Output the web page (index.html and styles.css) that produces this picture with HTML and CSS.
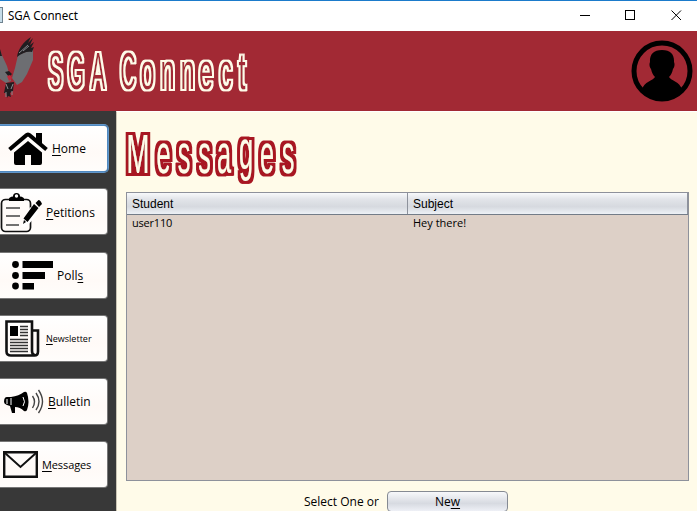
FILE: index.html
```html
<!DOCTYPE html>
<html lang="en">
<head>
<meta charset="utf-8">
<title>SGA Connect</title>
<link rel="stylesheet" href="styles.css">
</head>
<body>
<div class="window">
  <div class="titlebar">
    <span class="app-icon"></span>
    <span class="title"><svg width="90" height="22"><text x="0" y="14" textLength="70" lengthAdjust="spacingAndGlyphs">SGA Connect</text></svg></span>
    <svg class="controls" width="137" height="30" fill="none" stroke="#000" shape-rendering="crispEdges"><path d="M20 14.5h10M65.500 9.500h9v9h-9z"/><path shape-rendering="auto" d="M111.500 9.500l9.500 9.500M121 9.500l-9.500 9.500"/></svg>
  </div>
  <header class="banner">
    <svg class="eagle" width="36" height="80" viewBox="0 31 36 80">
      <path fill="#6d6e72" d="M0 51L7 66 9 73 11 81 6 83 0 79zM15 68L18 55 33 49 33 60 27 74 22 82 17 85 12 78z"/>
      <path fill="#201d20" d="M0 49L2 56 0 56zM17 57C18 49 24 41 31 37L28 43 33 38 30 45 34 42 31 48 34 47 32 52C27 51 22 53 17 57zM5 72l4-1 3 3-3 3zM6 83l8-1-1 9-3 2 1 4-3-1-1 2-1-5-2 0z"/>
      <path stroke="#84858a" fill="none" d="M19 53l9-8M23 51l6-5"/>
      <path fill="#c1293b" d="M7 76l3-1 2 3-3 3z"/>
      <path stroke="#8b8d91" fill="none" d="M6 84l2 5M13 84l-2 5M6 92v5M12 91v4"/>
    </svg>
    <h1 class="brand"><svg width="216" height="80" viewBox="40 31 216 80">
      <defs><filter id="cream-edge" filterUnits="userSpaceOnUse" x="40" y="31" width="216" height="80"><feMorphology in="SourceAlpha" operator="dilate" radius="2" result="d"/><feFlood flood-color="#fffbe9"/><feComposite in2="d" operator="in" result="o"/><feMerge><feMergeNode in="o"/><feMergeNode in="SourceGraphic"/></feMerge></filter></defs>
      <g filter="url(#cream-edge)" fill="#a22934" font-size="52"><text class="display" transform="translate(0 89) scale(.41 1)" x="135.400 185.400 239 275 312.200">SGA C</text><text class="display" transform="translate(0 89) scale(.49 1)" x="301 341.800 382.700 420.400 460.200 493.900">onnect</text></g>
    </svg></h1>
    <svg class="avatar" width="62" height="64" viewBox="0 0 62 64"><defs><clipPath id="face"><circle cx="31" cy="32" r="29"/></clipPath></defs><circle cx="31" cy="32" r="28" fill="none" stroke="#000" stroke-width="5"/><path clip-path="url(#face)" d="M31 11c9 0 12.500 5 12 12 1 2 .5 5-1 7-1 4-2 6-4 8 2 4 11 4 13 13v13H11V51c2-9 11-9 13-13-2-2-3-4-4-8-1.500-2-2-5-1-7C18.500 16 22 11 31 11z"/></svg>
  </header>
  <div class="body">
    <nav class="sidebar">
      <button class="nav focused"><svg class="icon home" width="40" height="34" viewBox="0 0 40 34"><path d="M6 20.500L20 9l14 11.500V31q0 2-2 2h-9V23h-6v10H8q-2 0-2-2z"/><path d="M28 1h6v12l-6-4z"/><path d="M1.500 17.500L18 3.500q2-2 4 0l16.500 14" fill="none" stroke="#000" stroke-width="4"/><path d="M4 20.500L20 7l16 13.500" fill="none" stroke="#fff" stroke-width="1"/></svg><span><u>H</u>ome</span></button>
      <button class="nav second"><svg class="icon petitions" width="42" height="41" viewBox="0 0 42 41"><rect x="1.500" y="7.500" width="29" height="32" rx="4" fill="none" stroke="#111" stroke-width="1.700"/><path d="M9 9l0-2q0-2 4-2.500a3.500 3.500 0 017 0Q24 5 24 7v2z"/><circle cx="16.500" cy="4" r="1.700" fill="#fff"/><path d="M6 16h14M6 24h14M6 33h13" stroke="#444" stroke-width="1.400"/><path d="M30 15l9 6-13 14h-5z" fill="#fff"/><path d="M35.500 11l3-3q2 0 3.500 4l-3 3zM34 12l4.500 4L27.500 30l-4-3.500z"/><path d="M24 28l2 2-3 2z"/></svg><span><u>P</u>etitions</span></button>
      <button class="nav third"><svg class="icon polls" width="41" height="29" viewBox="0 0 41 29"><circle cx="3.500" cy="3.500" r="3.400"/><circle cx="3.500" cy="14.500" r="3.400"/><circle cx="3.500" cy="25" r="3.400"/><path d="M10.500 0H41v7H10.500zM10.500 11H33v7H10.500zM10.500 22H22v6.500H10.500z"/></svg><span>Poll<u>s</u></span></button>
      <button class="nav small"><svg class="icon news" width="35" height="37" viewBox="0 0 35 37"><path d="M27 10.500h6v21q0 4-3.500 4H6q-4.500 0-4.500-4v-30h25.500V31q0 4 3 4" fill="none" stroke="#111" stroke-width="2.600"/><path d="M5 6h8v10H5z"/><path d="M15 6.500h8M15 9.500h8M15 12.500h8M15 15.500h8M5 19.500h18M5 22.500h18M5 25.500h18M5 28.500h18M5 31.500h18" stroke="#333" stroke-width="1.400"/></svg><span><u>N</u>ewsletter</span></button>
      <button class="nav"><svg class="icon bulletin" width="40" height="25" viewBox="0 0 40 25"><path d="M0 13q0-5 3-5l4 0Q15 7 20 3q2-1 3 1 3 9 0 17-1 2-3 1-4-4-9-4v6H8l-2-7-3-1q-3-1-3-3z"/><path d="M3 10v5M19 8q3 5 0 9M7 9v7" fill="none" stroke="#fff"/><path d="M28.500 7q4 5.500 0 12M32 4q6 8.500 0 17M34.500 1q8 11.500 0 23" fill="none" stroke="#444" stroke-width="1.400"/></svg><span><u>B</u>ulletin</span></button>
      <button class="nav medium"><svg class="icon mail" width="35" height="27" viewBox="0 0 35 27" fill="none" stroke="#111"><path stroke-width="2.400" d="M1.200 1.200h32.600v24.600H1.200z"/><path stroke-width="2" d="M2 2l15.500 14L33 2"/></svg><span><u>M</u>essages</span></button>
    </nav>
    <main class="content">
      <h2 class="heading"><svg width="184" height="70" viewBox="120 118 184 70">
        <defs><filter id="red-edge" filterUnits="userSpaceOnUse" x="120" y="118" width="184" height="70"><feMorphology in="SourceAlpha" operator="dilate" radius="3" result="d"/><feFlood flood-color="#a81824"/><feComposite in2="d" operator="in" result="o"/><feMerge><feMergeNode in="o"/><feMergeNode in="SourceGraphic"/></feMerge></filter></defs>
        <g filter="url(#red-edge)" fill="#fffbe9" font-size="55"><text class="display" transform="translate(0 173) scale(.5 1)" x="276">M</text><text class="display" transform="translate(0 173) scale(.46 1)" x="355.400 400 444.600 487 534.800 580.400 626" dy="0 0 0 0 -4 4 0">essages</text></g>
      </svg></h2>
      <div class="table">
        <div class="row head"><span>Student</span><span>Subject</span></div>
        <div class="row"><span class="user">user110</span><span>Hey there!</span></div>
      </div>
      <div class="actions"><span class="prompt">Select One or</span><button class="new">Ne<u>w</u></button></div>
    </main>
  </div>
</div>
</body>
</html>
```

FILE: styles.css
```css
* { box-sizing: border-box; }
body { margin: 0; overflow: hidden; font-family: "Open Sans", "Noto Sans", sans-serif; font-size: 12px; color: #000; }
.window { width: 697px; height: 511px; display: flex; flex-direction: column; overflow: hidden; background: #fff; }
.titlebar { height: 31px; flex: none; display: flex; align-items: flex-start; border-top: 1px solid #1b7bcb; }
.app-icon { width: 3px; height: 16px; margin-top: 6px; border: 1px solid #6f8390; border-left: 0; background: #c5dce9; }
.title { margin: 5px 0 0 5px; font-family: "Noto Sans", sans-serif; }
.title svg { display: block; }
.controls { margin-left: auto; }
.banner { height: 80px; flex: none; display: flex; background: #a22934; }
.brand, .heading { margin: 0; line-height: 0; }
.eagle { flex: none; }
.brand { margin-left: 4px; }
.display { font-family: "Liberation Sans", sans-serif; font-weight: normal; text-anchor: middle; white-space: pre; }
.avatar { margin: 8px 4px 0 auto; }
.body { flex: 1; min-height: 0; display: flex; }
.sidebar { width: 116px; flex: none; display: flex; flex-direction: column; gap: 16px; padding-top: 14px; background: #383838; }
.nav { width: 108px; height: 47px; flex: none; display: flex; align-items: center; padding: 0; border: 1px solid #777; border-left: 0; border-radius: 0 4px 4px 0; background: linear-gradient(#fff, #fffaf7 60%, #fffdfb); font: inherit; color: #000; }
.nav.focused { box-shadow: 0 0 0 1px #6297ca; border-color: #5089c0; }
.nav.second { padding-top: 2px; }
.nav.third { margin-top: 1px; }
.nav span { line-height: 16px; }
.nav.small { font-size: 9px; }
.nav.medium { font-size: 11px; letter-spacing: -.1px; }
u { text-decoration-thickness: 1px; text-underline-offset: 2px; }
.icon { flex: none; }
.home { margin: 0 4px 0 8px; }
.petitions { margin: 0 4px 0 0; }
.polls { margin: 0 4px 0 12px; }
.news { margin: 0 6px 0 5px; }
.bulletin { margin: 0 4px 0 4px; }
.mail { margin: 0 4px 0 3px; }
.content { flex: 1; min-width: 0; border-left: 1px solid #c9c4b4; border-top: 1px solid #fff; background: #fffbe9; padding: 6px 8px 0 9px; }
.heading { margin-left: -6px; height: 74px; }
.table { height: 289px; border: 1px solid #8e919b; background: #ddd0c7; }
.row { display: grid; grid-template-columns: 281px 1fr; font-size: 11px; line-height: 15px; }
.row span { padding-left: 5px; }
.user { letter-spacing: -.2px; }
.row.head { height: 22px; font: 12px/22px "Liberation Sans", sans-serif; border-bottom: 1px solid #737c88; background: linear-gradient(#f8f9fb, #e2e4e9 30%, #d6d9df 65%, #edf1f6); }
.head span { height: 21px; border-right: 1px solid #8d929c; }
.actions { display: flex; align-items: center; margin: 10px 0 0 178px; }
.prompt { width: 83px; white-space: nowrap; }
.new { width: 121px; height: 21px; padding: 0; border: 1px solid #858a93; border-radius: 4px; background: linear-gradient(#f7f8fb, #d7dae1 60%, #eef0f6); font: inherit; color: #000; }
```
